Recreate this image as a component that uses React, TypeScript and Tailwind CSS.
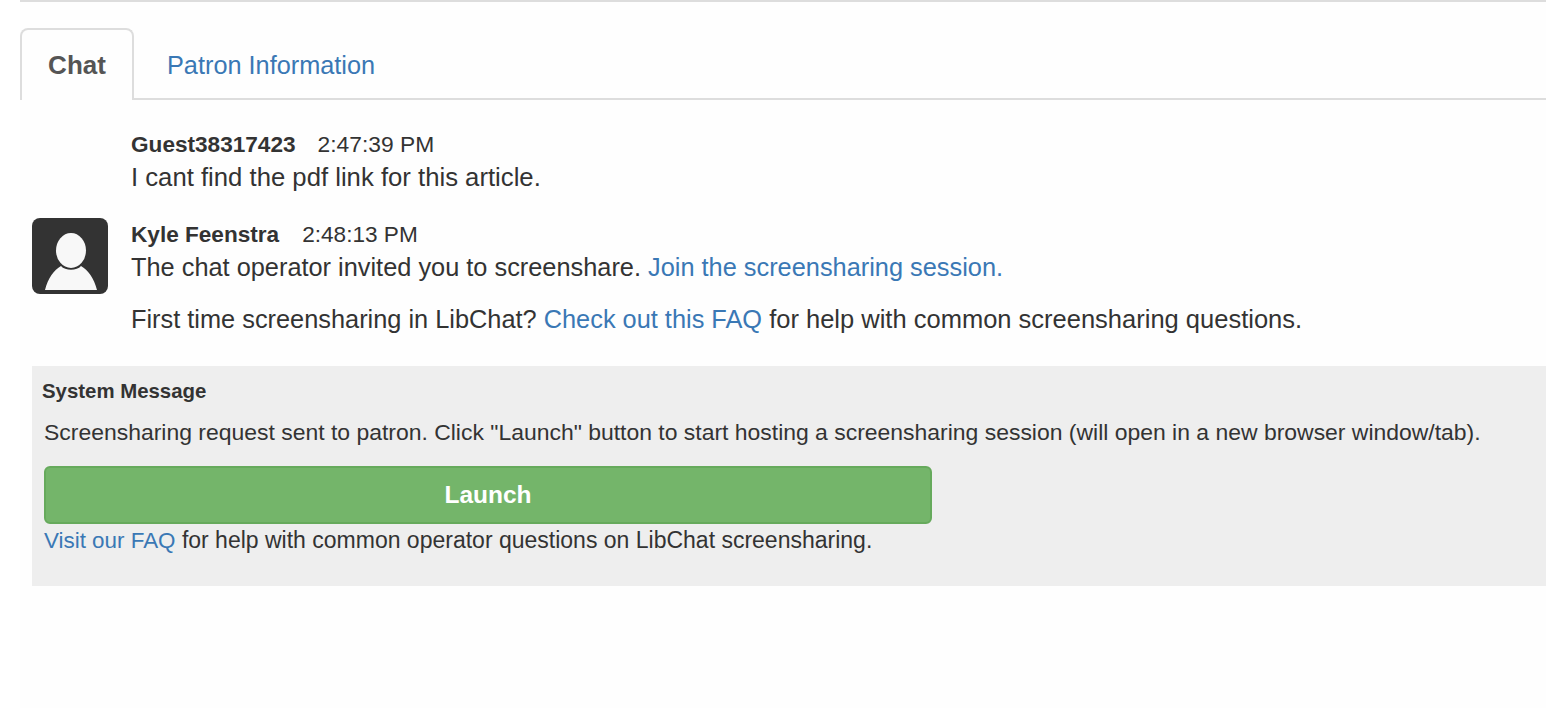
const App = () => {
  return (
    <div className="h-[708px] overflow-hidden bg-white pl-5 font-['Liberation_Sans',Arial,sans-serif] text-[#333]">
      <div className="h-full border-t-2 border-[#ddd] bg-[#fefefe] pt-[26px]">
        <div className="flex h-[72px] border-b-2 border-[#ddd] text-[25.3px]">
          <div className="flex h-[72px] w-[114px] items-center justify-center rounded-t-lg border-2 border-b-0 border-[#ddd] bg-[#fefefe] text-[26px] font-bold text-[#555]">
            {'Chat'}
          </div>
          <a className="ml-[33px] flex items-center pt-[6px] text-[#3a78b5]">{'Patron Information'}</a>
        </div>

        <div className="pl-3">
          <div className="pl-[99px] pt-[27px] text-[25.7px] leading-[33px]">
            <div>
              <b className="text-[22.6px]">{'Guest38317423'}</b>
              <span className="ml-[22px] text-[22.8px]">{'2:47:39 PM'}</span>
            </div>
            <div>{'I cant find the pdf link for this article.'}</div>
          </div>

          <div className="mt-[24px] flex">
            <div className="h-[76px] w-[76px] shrink-0 overflow-hidden rounded-lg bg-[#333]">
              <svg width="76" height="76" viewBox="0 0 76 76">
                <ellipse cx="39" cy="32.5" rx="15" ry="17.5" fill="#f8f8f8" />
                <path d="M13 72 C16 60 22 52 29 48 C33 53 45 53 49 48 C56 52 62 60 65 72 Z" fill="#f8f8f8" />
              </svg>
            </div>
            <div className="-mt-px pl-[23px] text-[25.35px] leading-[33px]">
              <div>
                <b className="text-[22.6px]">{'Kyle Feenstra'}</b>
                <span className="ml-[23px] text-[22.6px]">{'2:48:13 PM'}</span>
              </div>
              <div>
                {'The chat operator invited you to screenshare. '}
                <a className="text-[#3a78b5]">{'Join the screensharing session.'}</a>
              </div>
              <div className="mt-[19px]">
                {'First time screensharing in LibChat? '}
                <a className="text-[#3a78b5]">{'Check out this FAQ'}</a>
                <span className="text-[25.5px]">{' for help with common screensharing questions.'}</span>
              </div>
            </div>
          </div>

          <div className="mt-[30px] h-[220px] bg-[#eee] pl-3 pt-[11px] text-[22.95px]">
            <div className="-ml-[2px] text-[20.4px] font-bold leading-[28px]">{'System Message'}</div>
            <div className="mt-[13px] leading-[28px]">
              {'Screensharing request sent to patron. Click "Launch" button to start hosting a screensharing session (will open in a new browser window/tab).'}
            </div>
            <button className="mt-5 flex h-[58px] w-[888px] items-center justify-center rounded-md border-2 border-[#66aa5c] bg-[#74b56a] text-[24.5px] font-bold text-white">
              {'Launch'}
            </button>
            <div className="leading-[32px]">
              <a className="text-[22.4px] text-[#3a78b5]">{'Visit our FAQ'}</a>
              <span className="text-[23px]">{' for help with common operator questions on LibChat screensharing.'}</span>
            </div>
          </div>
        </div>
      </div>
    </div>
  );
};

export default App;
